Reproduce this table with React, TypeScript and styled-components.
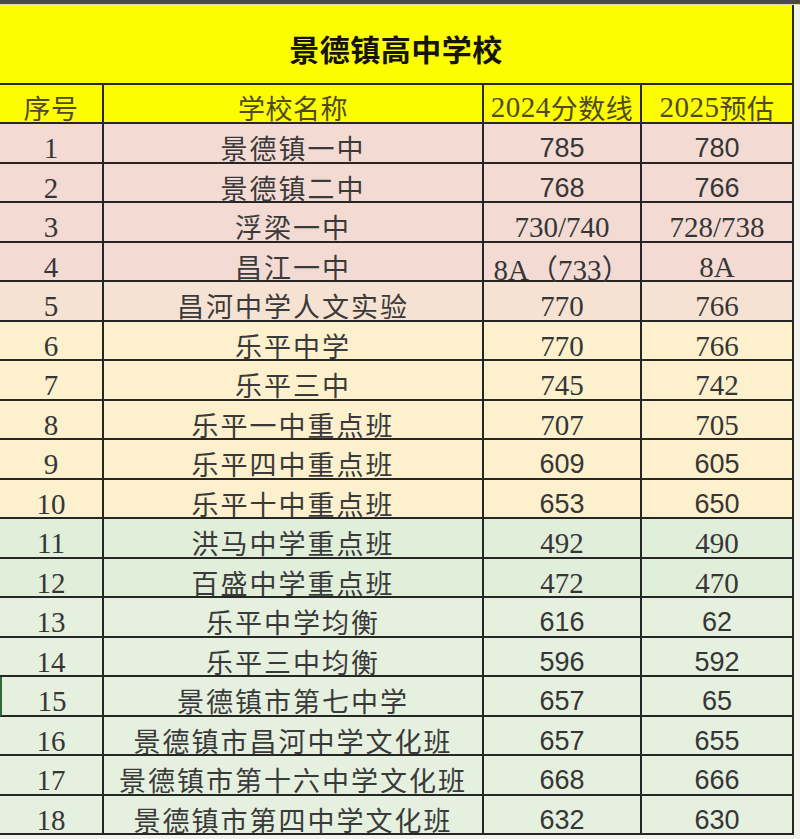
import React from "react";
import styled, { createGlobalStyle } from "styled-components";

const GlobalStyle = createGlobalStyle`
  html, body { margin: 0; padding: 0; background: #f2f2ef; }
  * { box-sizing: border-box; }
`;

type Tone = "pink" | "peach" | "cream" | "green" | "mint";

const toneColors: Record<Tone, string> = {
  pink: "#f3dbd4",
  peach: "#f6e2d2",
  cream: "#fcf0cd",
  green: "#e0eeda",
  mint: "#e5f0df",
};

const Page = styled.div`
  width: 800px;
  height: 839px;
  background: #f2f2ef;
  display: flex;
  flex-direction: column;
  overflow: hidden;
`;

const TopBand = styled.div`
  height: 5px;
  background: #4a4a42;
  border-bottom: 1px solid #d8d8c8;
`;

const Sheet = styled.div`
  width: 794px;
  display: grid;
  grid-template-columns: 104px 380px 158px 152px;
  grid-template-rows: 80px 39px repeat(18, 39.5px);
  font-family: "Noto Sans CJK SC", "Noto Sans", sans-serif;
`;

const Title = styled.div`
  grid-column: 1 / -1;
  background: #fdfd02;
  border-right: 2px solid #2a2a22;
  border-bottom: 2px solid #2a2a22;
  display: flex;
  align-items: center;
  justify-content: center;
  padding-top: 8px;
  font-size: 30px;
  font-weight: 700;
  color: #141408;
  letter-spacing: 0.5px;
`;

const HeadCell = styled.div`
  background: #fdfd02;
  border-right: 2px solid #2a2a22;
  border-bottom: 2px solid #2a2a22;
  display: flex;
  align-items: center;
  justify-content: center;
  padding-top: 8px;
  font-size: 27px;
  color: #4f4b1c;
  white-space: nowrap;
  letter-spacing: 0.5px;
`;

const HeadNum = styled.span`
  font-family: "Liberation Serif", "Noto Sans CJK SC", serif;
  font-size: 29px;
`;

const Cell = styled.div<{ $tone: Tone; $serif?: boolean; $marked?: boolean }>`
  background: ${(p) => toneColors[p.$tone]};
  border-right: 2px solid #262626;
  border-bottom: 2px solid #262626;
  border-left: ${(p) => (p.$marked ? "2px solid #2f6a3a" : "none")};
  display: flex;
  align-items: center;
  justify-content: center;
  padding-top: 12px;
  color: #363636;
  white-space: nowrap;
  font-size: ${(p) => (p.$serif ? "29px" : "27px")};
  font-family: ${(p) =>
    p.$serif
      ? '"Liberation Serif", "Noto Sans CJK SC", serif'
      : '"Liberation Sans", "Noto Sans CJK SC", sans-serif'};
`;

const NameCell = styled(Cell)`
  font-family: "Noto Sans CJK SC", "Noto Sans", sans-serif;
  font-size: 27px;
  letter-spacing: 2px;
  padding-top: 10px;
  color: #3a3a3a;
`;

type Row = {
  no: number;
  name: string;
  y2024: string;
  y2025: string;
  tone: Tone;
  serif: boolean;
};

const rows: Row[] = [
  { no: 1, name: "景德镇一中", y2024: "785", y2025: "780", tone: "pink", serif: false },
  { no: 2, name: "景德镇二中", y2024: "768", y2025: "766", tone: "pink", serif: false },
  { no: 3, name: "浮梁一中", y2024: "730/740", y2025: "728/738", tone: "pink", serif: true },
  { no: 4, name: "昌江一中", y2024: "8A（733）", y2025: "8A", tone: "pink", serif: true },
  { no: 5, name: "昌河中学人文实验", y2024: "770", y2025: "766", tone: "peach", serif: true },
  { no: 6, name: "乐平中学", y2024: "770", y2025: "766", tone: "cream", serif: true },
  { no: 7, name: "乐平三中", y2024: "745", y2025: "742", tone: "cream", serif: true },
  { no: 8, name: "乐平一中重点班", y2024: "707", y2025: "705", tone: "cream", serif: true },
  { no: 9, name: "乐平四中重点班", y2024: "609", y2025: "605", tone: "cream", serif: false },
  { no: 10, name: "乐平十中重点班", y2024: "653", y2025: "650", tone: "cream", serif: false },
  { no: 11, name: "洪马中学重点班", y2024: "492", y2025: "490", tone: "green", serif: true },
  { no: 12, name: "百盛中学重点班", y2024: "472", y2025: "470", tone: "green", serif: true },
  { no: 13, name: "乐平中学均衡", y2024: "616", y2025: "62", tone: "mint", serif: false },
  { no: 14, name: "乐平三中均衡", y2024: "596", y2025: "592", tone: "mint", serif: false },
  { no: 15, name: "景德镇市第七中学", y2024: "657", y2025: "65", tone: "mint", serif: false },
  { no: 16, name: "景德镇市昌河中学文化班", y2024: "657", y2025: "655", tone: "mint", serif: false },
  { no: 17, name: "景德镇市第十六中学文化班", y2024: "668", y2025: "666", tone: "mint", serif: false },
  { no: 18, name: "景德镇市第四中学文化班", y2024: "632", y2025: "630", tone: "mint", serif: false },
];

export default function App() {
  return (
    <>
      <GlobalStyle />
      <Page>
        <TopBand />
        <Sheet>
          <Title>景德镇高中学校</Title>
          <HeadCell>序号</HeadCell>
          <HeadCell>学校名称</HeadCell>
          <HeadCell>
            <HeadNum>2024</HeadNum>分数线
          </HeadCell>
          <HeadCell>
            <HeadNum>2025</HeadNum>预估
          </HeadCell>
          {rows.map((r) => (
            <React.Fragment key={r.no}>
              <Cell $tone={r.tone} $serif $marked={r.no === 15}>
                {r.no}
              </Cell>
              <NameCell $tone={r.tone}>{r.name}</NameCell>
              <Cell $tone={r.tone} $serif={r.serif}>
                {r.y2024}
              </Cell>
              <Cell $tone={r.tone} $serif={r.serif}>
                {r.y2025}
              </Cell>
            </React.Fragment>
          ))}
        </Sheet>
      </Page>
    </>
  );
}
